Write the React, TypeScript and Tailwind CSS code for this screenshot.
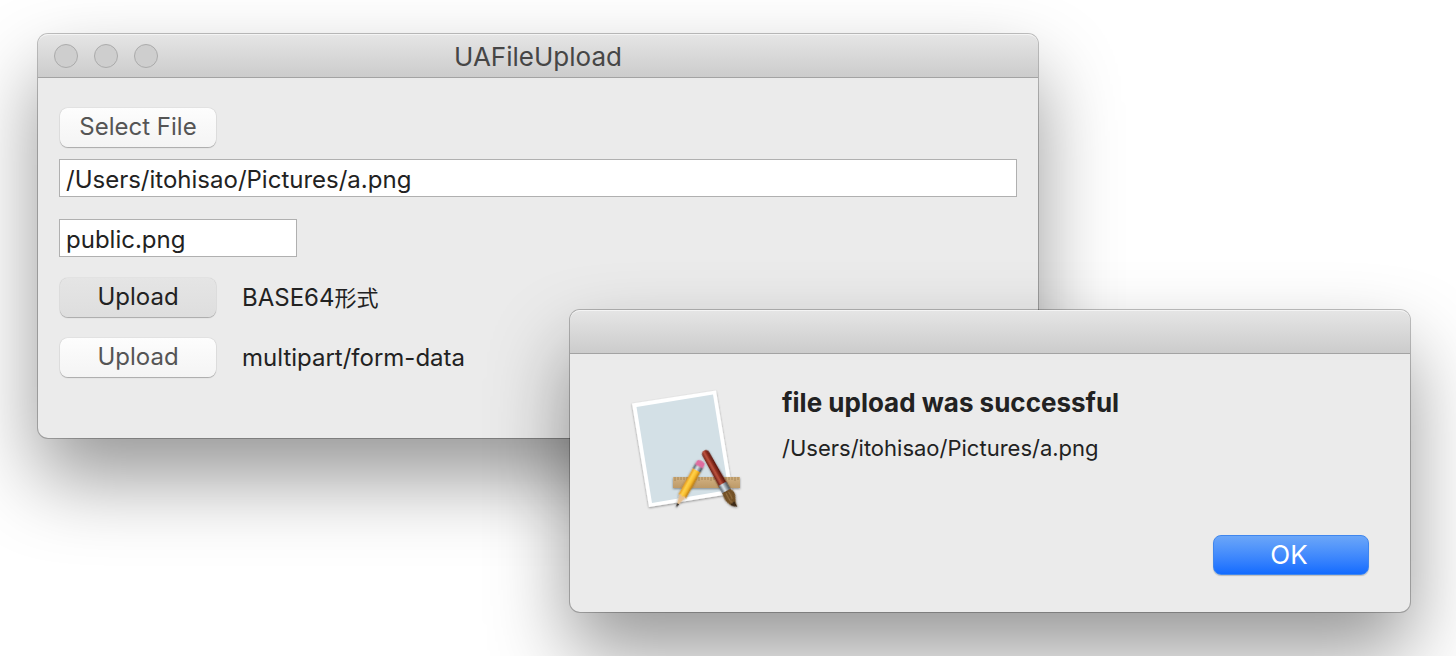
import { useState } from "react";
import type { ReactNode } from "react";

type WindowProps = {
  title?: string;
  controls?: boolean;
  className?: string;
  children: ReactNode;
};

function Window({ title, controls = false, className = "", children }: WindowProps) {
  return (
    <section
      className={`absolute rounded-[10px] bg-[#ebebeb] shadow-[0_0_0_1px_rgba(0,0,0,0.24),0_40px_80px_rgba(0,0,0,0.41)] ${className}`}
    >
      <header className="grid h-11 grid-cols-[1fr_auto_1fr] items-center rounded-t-[10px] border-t border-b border-t-[#f4f4f4] border-b-[#a3a3a3] bg-linear-to-b from-[#e5e5e5] to-[#cccccc] px-4">
        <div className="flex gap-4">
          {controls &&
            ["Close", "Minimize", "Zoom"].map((name) => (
              <button
                key={name}
                aria-label={name}
                className="size-6 rounded-full border border-[#ababab] bg-[#cecece]"
              />
            ))}
        </div>
        {title && <h1 className="pt-0.5 text-[26px] leading-8 text-[#464646]">{title}</h1>}
      </header>
      {children}
    </section>
  );
}

type PushButtonProps = {
  label: string;
  pressed?: boolean;
  id?: string;
};

function PushButton({ label, pressed = false, id }: PushButtonProps) {
  const look = pressed
    ? "from-[#e5e5e5] to-[#dedede] text-[#222222]"
    : "from-[#fdfdfd] to-[#f4f4f4] text-[#555555]";

  return (
    <button
      id={id}
      type="button"
      className={`h-[39px] w-[156px] shrink-0 rounded-lg bg-linear-to-b pb-px text-2xl shadow-[0_0_1px_rgba(0,0,0,0.35),0_1px_1px_rgba(0,0,0,0.25)] ${look}`}
    >
      {label}
    </button>
  );
}

function AppIcon() {
  return (
    <svg viewBox="0 0 160 160" className="size-40" aria-hidden="true">
      <defs>
        <linearGradient id="pencil" x1="0" x2="1">
          <stop offset="0" stopColor="#e89a17" />
          <stop offset="0.35" stopColor="#ffd34d" />
          <stop offset="0.65" stopColor="#f9bd2b" />
          <stop offset="1" stopColor="#b97512" />
        </linearGradient>
        <linearGradient id="handle" x1="0" x2="1">
          <stop offset="0" stopColor="#5c160d" />
          <stop offset="0.4" stopColor="#c25743" />
          <stop offset="0.6" stopColor="#93301f" />
          <stop offset="1" stopColor="#4c0f09" />
        </linearGradient>
        <linearGradient id="metal" x1="0" x2="1">
          <stop offset="0" stopColor="#46535f" />
          <stop offset="0.4" stopColor="#dfe9ee" />
          <stop offset="1" stopColor="#3a4650" />
        </linearGradient>
        <linearGradient id="ruler" x1="0" x2="0" y1="0" y2="1">
          <stop offset="0" stopColor="#d2b182" />
          <stop offset="1" stopColor="#bd9a68" />
        </linearGradient>
        <filter id="drop" x="-20%" y="-20%" width="140%" height="140%">
          <feDropShadow dx="0" dy="1" stdDeviation="1" floodOpacity="0.4" />
        </filter>
      </defs>
      <g filter="url(#drop)">
        <path d="M22 33.500 L106 20.500 L123 123.500 L39 137 Z" fill="#ffffff" />
        <path d="M26.500 37 L103 24.500 L118.500 120 L42 133 Z" fill="#d3e0e6" />
      </g>
      <g filter="url(#drop)">
        <rect x="63" y="107" width="67" height="11" fill="url(#ruler)" />
        <path
          d="M65 107v4M68 107v3M71 107v3M74 107v3M77 107v4M80 107v3M83 107v3M86 107v3M89 107v4M92 107v3M95 107v3M98 107v3M101 107v4M104 107v3M107 107v3M110 107v3M113 107v4M116 107v3M119 107v3M122 107v3M125 107v4M128 107v3"
          stroke="#9c7e4c"
          strokeWidth="0.8"
        />
      </g>
      <g filter="url(#drop)" transform="translate(91 92.500) rotate(29)">
        <path d="M-4.300 35h8.600l-3.600 13h-1.400z" fill="#e6bf8f" />
        <path d="M-1.200 47h2.400l-1.200 4.500z" fill="#2b2522" />
        <path d="M-4.300 8h8.600v31l-2-1.500-2.300 1.500-2.300-1.500-2 1.500z" fill="url(#pencil)" />
        <rect x="-4.300" y="3.500" width="8.600" height="5.500" fill="url(#metal)" />
        <path d="M-4.300 4.500v-3.500q0-2.800 4.300-2.800t4.300 2.800v3.500z" fill="#df6da0" />
      </g>
      <g filter="url(#drop)" transform="translate(94.500 81.500) rotate(-29)">
        <path d="M-3.800 3q0-4 3.800-4t3.800 4l.6 36h-8.800z" fill="url(#handle)" />
        <path d="M-4.300 37h8.600l.3 9h-9.200z" fill="url(#metal)" />
        <path d="M-4.500 45h9q3.500 6-.2 11-2 3-2.300 8-5.500-3-7-9-1.200-4 .5-10z" fill="#735128" />
        <path d="M-1.500 47q-1 6 1 12M1.500 47q1 4-.5 8" fill="none" stroke="#a17b48" strokeWidth="0.8" />
        <path d="M2 58q0 3 0 6-4-2-5.500-5z" fill="#3d2a19" />
      </g>
    </svg>
  );
}

export default function App() {
  const [path, setPath] = useState("/Users/itohisao/Pictures/a.png");
  const [uti, setUti] = useState("public.png");

  return (
    <main className="relative min-h-screen overflow-hidden bg-white font-['Inter','Noto_Sans_CJK_JP',sans-serif] text-[#222222]">
      <Window title="UAFileUpload" controls className="top-[34px] right-[418px] left-[38px]">
        <div className="flex flex-col items-start px-[21px] pt-[30px] pb-[61px]">
          <div className="px-px">
            <PushButton label="Select File" />
          </div>
          <input
            aria-label="File path"
            value={path}
            onChange={(e) => setPath(e.target.value)}
            className="mt-3 h-[38px] w-full border border-[#b0b0b0] bg-white px-1.5 pt-0.5 text-2xl outline-none"
          />
          <input
            aria-label="File type"
            value={uti}
            onChange={(e) => setUti(e.target.value)}
            className="mt-[22px] h-[38px] w-[238px] border border-[#b0b0b0] bg-white px-1.5 pt-0.5 text-2xl outline-none"
          />
          <div className="mt-[21px] flex flex-col gap-[21px] px-px">
            <div className="flex h-[39px] items-center gap-[26px]">
              <PushButton id="base64" label="Upload" pressed />
              <label htmlFor="base64" className="text-2xl">
                BASE64<span className="text-[22px]">形式</span>
              </label>
            </div>
            <div className="flex h-[39px] items-center gap-[26px]">
              <PushButton id="multipart" label="Upload" />
              <label htmlFor="multipart" className="text-2xl">
                multipart/form-data
              </label>
            </div>
          </div>
        </div>
      </Window>

      <Window className="top-[310px] right-[46px] left-[570px]">
        <div role="alertdialog" aria-labelledby="alert-title" className="flex flex-col pt-4 pr-[41px] pb-[37px] pl-10">
          <div className="flex items-start">
            <AppIcon />
            <div className="pt-[15px] pl-3">
              <h2 id="alert-title" className="text-[26px] leading-9 font-bold">
                file upload was successful
              </h2>
              <p className="mt-[11px] text-[22px] leading-8">{path}</p>
            </div>
          </div>
          <button
            type="button"
            className="mt-[5px] h-10 w-[156px] self-end rounded-lg border border-[#3f86ee] bg-linear-to-b from-[#6ba6f8] to-[#116bff] pr-1 text-[26px] leading-8 text-white shadow-[0_1px_1px_rgba(0,0,0,0.2)]"
          >
            OK
          </button>
        </div>
      </Window>
    </main>
  );
}
